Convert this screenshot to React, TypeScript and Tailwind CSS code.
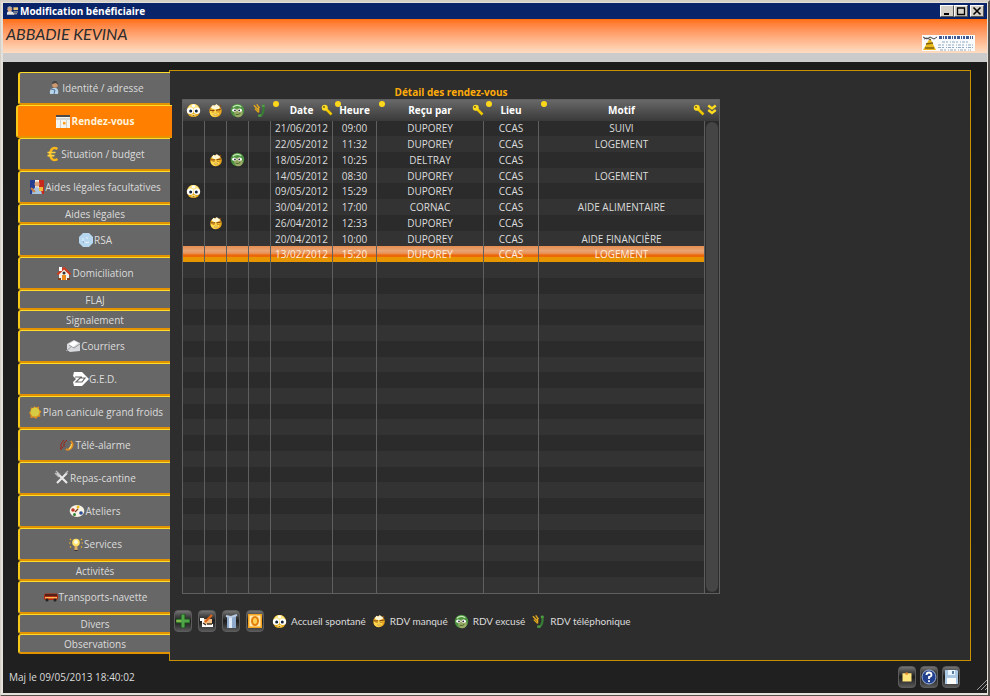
import React from "react";

type IconProps = { className?: string };

const Svg = ({ className = "size-4", children }: { className?: string; children: React.ReactNode }) => (
  <svg viewBox="0 0 16 16" className={`shrink-0 ${className}`} aria-hidden="true">
    {children}
  </svg>
);

const WideEyes = ({ className }: IconProps) => (
  <Svg className={className}>
    <circle cx="8" cy="8" r="7" fill="#e3aa1c" />
    <path d="M2 6Q3 1 8 1t6 5L8 8z" fill="#ffe680" />
    <ellipse cx="4.400" cy="8.200" rx="3.500" ry="3.400" fill="#fff" />
    <ellipse cx="11.600" cy="8.200" rx="3.500" ry="3.400" fill="#fff" />
    <circle cx="5" cy="8.600" r="1.600" fill="#14233c" />
    <circle cx="11" cy="8.600" r="1.600" fill="#14233c" />
    <circle cx="8" cy="3" r="1.800" fill="#fff" />
    <path d="M6 13h4" stroke="#fff0a0" strokeWidth="2" />
    <path d="M7 13.500h2" stroke="#7a4b00" />
  </Svg>
);

const Grumpy = ({ className }: IconProps) => (
  <Svg className={className}>
    <circle cx="8" cy="8.600" r="6.600" fill="#e9a51c" />
    <circle cx="7" cy="10" r="5" fill="#ffd84c" />
    <path d="M3 5l2-3 2 1 2-2 2 2 2 0-1 3-5 1z" fill="#fff8d8" />
    <path d="M12 3.500l2-1M2 7.800h5M8.500 7.800l5-1" stroke="#8a4a08" strokeWidth="1.300" fill="none" />
    <path d="M4 9.500h2.500M9 9.500h3" stroke="#b8741a" />
    <ellipse cx="8" cy="12.500" rx="1.800" ry="1" fill="#fff0b0" stroke="#b87410" strokeWidth=".6" />
  </Svg>
);

const GreenFace = ({ className }: IconProps) => (
  <Svg className={className}>
    <circle cx="8" cy="8" r="7.200" fill="#4c9441" />
    <circle cx="9" cy="10.500" r="4.600" fill="#9aaa66" />
    <path d="M3 4.500q4-3.500 9-.5" stroke="#c5e8b0" strokeWidth="1.300" fill="none" />
    <ellipse cx="4.600" cy="7.600" rx="2.300" ry="1.700" fill="#fff" />
    <ellipse cx="10.400" cy="7.600" rx="2.300" ry="1.700" fill="#fff" />
    <circle cx="5.300" cy="7.800" r=".9" fill="#112" />
    <circle cx="9.800" cy="7.800" r=".9" fill="#112" />
    <path d="M6 12q3 1 5-1" stroke="#3f6428" fill="none" />
  </Svg>
);

const GreenPhone = ({ className }: IconProps) => (
  <Svg className={className}>
    <path d="M11.500 2q1.500 3 .5 7-1 4-4 5" stroke="#377d35" strokeWidth="2.400" fill="none" />
    <path d="M10.500 3h3M6.500 13.500h3.500" stroke="#4f9c45" strokeWidth="2.400" />
    <path d="M2 2.500l5 5M5 1.500l3 4M3 6l4 4M7 5v5" stroke="#e3a81c" strokeWidth="1.500" />
  </Svg>
);

const KeyIcon = () => (
  <Svg className="size-3">
    <path d="M7 7l7 7" stroke="#f0c800" strokeWidth="3.400" />
    <circle cx="5" cy="5" r="4" fill="#ffdc20" />
    <circle cx="4" cy="4" r="1.200" fill="#6b5a10" />
  </Svg>
);

const Chevrons = () => (
  <Svg className="size-3">
    <path d="M3 2l5 4 5-4M3 8l5 4 5-4" stroke="#ffdc20" strokeWidth="3.200" fill="none" />
  </Svg>
);

const icons = {
  person: (
    <Svg>
      <path d="M4 14q-1-5 3-6h3q3 1 2 6z" fill="#b7d3ea" />
      <circle cx="9" cy="5" r="2.800" fill="#d09a70" />
      <path d="M6 4q0-3 3-3t3 4l-2-2z" fill="#444" />
      <path d="M5 9l4 1-1 4" stroke="#4d7098" fill="none" />
    </Svg>
  ),
  calendar: (
    <Svg>
      <rect x="0" y="2" width="14" height="13" fill="#f4f4ee" />
      <path d="M0 3h14" stroke="#4a4a4a" strokeWidth="2" />
      <path d="M0 6h14" stroke="#bbb" />
      <path d="M4.500 7v8M10.500 7v8" stroke="#d4d0c4" />
      <rect x="7" y="9" width="2.500" height="2.500" fill="#ff9a1a" />
    </Svg>
  ),
  euro: (
    <Svg>
      <path d="M12.500 3q-6-3.500-7.500 5 1.500 8.500 7.500 5" stroke="#f8b61a" strokeWidth="2.600" fill="none" />
      <path d="M2.500 6.500h8M2.500 9.700h7" stroke="#ffd23c" strokeWidth="1.700" />
    </Svg>
  ),
  flag: (
    <Svg>
      <path d="M1 1h5v14H1z" fill="#243c92" />
      <path d="M6 1h5v14H6z" fill="#eee" />
      <path d="M10 1h5v14h-5z" fill="#c72a1c" />
      <circle cx="8" cy="5" r="2.500" fill="#dda47c" />
      <path d="M3 15q0-6 5-7 4 1 5 7z" fill="#a9c4df" />
      <path d="M10 8h4v4h-4z" fill="#f5b83a" />
      <path d="M2 9l4 4" stroke="#d08040" strokeWidth="2" />
    </Svg>
  ),
  rsa: (
    <Svg>
      <path d="M5 1h6l4 4v6l-4 4H5l-4-4V5z" fill="#b7d7ee" />
      <path d="M5 6v3q3 3 6 1M8 6h2" stroke="#e8f6ff" fill="none" />
      <path d="M5 9l1 2" stroke="#7ca0bd" />
    </Svg>
  ),
  house: (
    <Svg>
      <path d="M3 8l5-5 5 5v7H3z" fill="#f5f0e8" />
      <path d="M1.500 9.500L8 3l6.500 6.500" stroke="#cc3a20" strokeWidth="2.200" fill="none" />
      <path d="M3 2h3v4H3z" fill="#fff" />
      <path d="M6 10h4v5H6z" fill="#ee8a1c" />
      <circle cx="8" cy="8" r="1.500" fill="#333" />
      <path d="M2 14h3M11 14h3" stroke="#7c4020" strokeWidth="2" />
    </Svg>
  ),
  mail: (
    <Svg>
      <path d="M2 6l7-4 6 3v8l-10 1-3-2z" fill="#d7d9dc" />
      <path d="M4 7l5 3 6-4" stroke="#999" fill="none" />
      <path d="M4 6l5-3 4 2-5 4z" fill="#fff" />
      <path d="M1 13l5-4" stroke="#a2a7ac" />
    </Svg>
  ),
  ged: (
    <Svg>
      <path d="M1 1h8l7 7-7 7H1l-1-4 3-3-3-3z" fill="#fff" />
      <path d="M3 11h6l3-4H7zM2 6h7" stroke="#666" strokeWidth="1.200" fill="none" />
    </Svg>
  ),
  sun: (
    <Svg>
      <path d="M7 2l2 1.500 3-1v3l2.500 2-1.500 2 .5 3-3 .5-1.500 2-2-1.500-3.500.5V11L2 9l2-2.500-.5-3 3 .5z" fill="#dd8d22" />
      <circle cx="8" cy="8" r="4.500" fill="#d6cb42" />
    </Svg>
  ),
  alarm: (
    <Svg>
      <path d="M2 12V7l3-4M5 10V6l3-3M1 13l3-3" stroke="#9c2418" strokeWidth="1" fill="none" />
      <path d="M12 4q3 4 0 7-3 3-5 1" stroke="#e18b22" strokeWidth="2" fill="none" />
      <path d="M12.500 7q0 3-2.500 5" stroke="#ffdc5c" strokeWidth="1.200" fill="none" />
    </Svg>
  ),
  cutlery: (
    <Svg>
      <path d="M3 3l10 10M13 3L3 13" stroke="#e8e8e8" strokeWidth="2.200" />
      <path d="M2 1l4 4M1 3l4 4M11 4l3-3" stroke="#bcbcbc" strokeWidth="1.400" />
    </Svg>
  ),
  palette: (
    <Svg>
      <ellipse cx="8" cy="8" rx="7.300" ry="6" fill="#f8f4e6" />
      <circle cx="4" cy="7" r="1.800" fill="#c43424" />
      <circle cx="9" cy="4" r="1.500" fill="#eebc20" />
      <circle cx="5.500" cy="11.500" r="1.500" fill="#30813a" />
      <circle cx="12" cy="10" r="1.800" fill="#2c4b9a" />
      <path d="M6 9l3-3" stroke="#7f3c20" strokeWidth="1.300" />
    </Svg>
  ),
  bulb: (
    <Svg>
      <circle cx="8" cy="6.500" r="3.800" fill="#ffe268" />
      <circle cx="8" cy="6" r="2" fill="#fffbe0" />
      <path d="M6.500 10h3v4h-3z" fill="#dcb060" />
      <path d="M2 3l1 1M1 7h1.500M2 11.500l1-1M14 3l-1 1M15 7h-1.500M14 11.500l-1-1" stroke="#efaf22" strokeWidth="1.200" />
      <path d="M6.500 14.500h3" stroke="#333" />
    </Svg>
  ),
  bus: (
    <Svg>
      <rect x="1" y="4.500" width="14" height="6.500" rx="2" fill="#b1260f" />
      <path d="M2 6h12" stroke="#45201a" strokeWidth="1.700" />
      <path d="M2 8.700h12" stroke="#ffc25a" strokeWidth="1.300" />
      <circle cx="4" cy="11" r="1.500" fill="#222" />
      <circle cx="12" cy="11" r="1.500" fill="#222" />
    </Svg>
  ),
};

type Tab = { label: string; icon?: keyof typeof icons; active?: boolean };

const tabs: Tab[] = [
  { label: "Identité / adresse", icon: "person" },
  { label: "Rendez-vous", icon: "calendar", active: true },
  { label: "Situation / budget", icon: "euro" },
  { label: "Aides légales facultatives", icon: "flag" },
  { label: "Aides légales" },
  { label: "RSA", icon: "rsa" },
  { label: "Domiciliation", icon: "house" },
  { label: "FLAJ" },
  { label: "Signalement" },
  { label: "Courriers", icon: "mail" },
  { label: "G.E.D.", icon: "ged" },
  { label: "Plan canicule grand froids", icon: "sun" },
  { label: "Télé-alarme", icon: "alarm" },
  { label: "Repas-cantine", icon: "cutlery" },
  { label: "Ateliers", icon: "palette" },
  { label: "Services", icon: "bulb" },
  { label: "Activités" },
  { label: "Transports-navette", icon: "bus" },
  { label: "Divers" },
  { label: "Observations" },
];

type Row = { date: string; time: string; by: string; reason?: string; walkIn?: boolean; missed?: boolean; excused?: boolean };

const rows: Row[] = [
  { date: "21/06/2012", time: "09:00", by: "DUPOREY", reason: "SUIVI" },
  { date: "22/05/2012", time: "11:32", by: "DUPOREY", reason: "LOGEMENT" },
  { date: "18/05/2012", time: "10:25", by: "DELTRAY", missed: true, excused: true },
  { date: "14/05/2012", time: "08:30", by: "DUPOREY", reason: "LOGEMENT" },
  { date: "09/05/2012", time: "15:29", by: "DUPOREY", walkIn: true },
  { date: "30/04/2012", time: "17:00", by: "CORNAC", reason: "AIDE ALIMENTAIRE" },
  { date: "26/04/2012", time: "12:33", by: "DUPOREY", missed: true },
  { date: "20/04/2012", time: "10:00", by: "DUPOREY", reason: "AIDE FINANCIÈRE" },
  { date: "13/02/2012", time: "15:20", by: "DUPOREY", reason: "LOGEMENT" },
];
const ROW_COUNT = 30;
const SELECTED = 8;

const WinButton = ({ label, children }: { label: string; children: React.ReactNode }) => (
  <button
    aria-label={label}
    className="flex h-3 w-[14px] items-center justify-center border border-t-white border-r-[#555] border-b-[#555] border-l-white bg-[#d4d0c8]"
  >
    <svg viewBox="0 0 10 10" className="size-[10px]" fill="none" stroke="#000" aria-hidden="true">
      {children}
    </svg>
  </button>
);

const ToolButton = ({ label, children }: { label: string; children: React.ReactNode }) => (
  <button
    aria-label={label}
    className="flex h-[22px] w-[18px] items-center justify-center rounded-[4px] border border-[#5c5c5c] bg-linear-to-b from-[#747474] via-[#1c1c1c] to-[#585858]"
  >
    {children}
  </button>
);

const HeadCell = ({ label, search = false }: { label: string; search?: boolean }) => (
  <th scope="col" className="relative p-0 font-bold">
    <span className="absolute top-px left-[2px] size-[6px] rounded-full bg-[#ffd81c]" />
    {label}
    {search && (
      <span className="absolute top-1 right-0">
        <KeyIcon />
      </span>
    )}
  </th>
);

const Cell = ({ children }: { children?: React.ReactNode }) => (
  <td className="border-l border-[#5f5f5f] p-0">
    <div className="flex h-[15px] items-center justify-center">{children}</div>
  </td>
);

const Legend = ({ icon, children }: { icon: React.ReactNode; children: React.ReactNode }) => (
  <li className="flex items-center gap-1">
    {icon}
    {children}
  </li>
);

export default function App() {
  return (
    <div className="flex min-h-screen flex-col border-t-2 border-r-2 border-b-2 border-l border-t-[#d4d0c8] border-r-[#55524e] border-b-[#55524e] border-l-[#d4d0c8] bg-[#1f1f1f] font-['Open_Sans','Noto_Sans',sans-serif] text-[10px] leading-3 text-[#dcdcdc]">
      <div className="flex grow flex-col border-t border-r border-b-2 border-l-2 border-[#e4e1db]">
        <div className="flex h-4 items-center justify-between bg-[#0a246a] px-[3px]">
          <div className="flex items-center gap-px font-bold text-white">
            <svg viewBox="0 0 14 12" className="h-3 w-[13px]" aria-hidden="true">
              <path d="M1 9q0-3 3-3 4 0 5 4H1z" fill="#e4e4e4" />
              <circle cx="4" cy="4" r="2.500" fill="#d8a07c" />
              <path d="M1 3q3-4 6 0z" fill="#aaa" />
              <path d="M8 2h5v3H8z" fill="#e8c67a" />
              <path d="M8 7h5M8 9h4" stroke="#d7cdb8" />
            </svg>
            Modification bénéficiaire
          </div>
          <div className="flex">
            <WinButton label="Réduire">
              <path d="M2 8h5" strokeWidth="2" />
            </WinButton>
            <WinButton label="Agrandir">
              <path d="M1.500 2h7v6.500h-7zM1 2h8" strokeWidth="1.300" />
            </WinButton>
            <span className="w-[2px]" />
            <WinButton label="Fermer">
              <path d="M1.500 1.500l7 7M8.500 1.500l-7 7" strokeWidth="1.600" />
            </WinButton>
          </div>
        </div>

        <header className="flex h-[34px] items-end justify-between bg-linear-to-b from-[#ff6f05] to-[#ffdcc2] pr-3 pl-[3px]">
          <h1 className="self-start pt-[3px] font-['Lato','Open_Sans',sans-serif] text-[16px] leading-6 text-[#2c2c2c] italic">ABBADIE KEVINA</h1>
          <svg viewBox="0 0 53 16" className="mb-[2px] h-4 w-[53px]" role="img" aria-label="Logo">
            <rect width="53" height="16" fill="#f8fafc" />
            <path d="M8 3l6 12H1z" fill="#ecb91c" />
            <path d="M4 9l7-1M3 13h9" stroke="#7c6412" strokeWidth="1.500" />
            <path d="M1 2l4 2 3-2 4 2 3-2M2 4l3-1 4 2" stroke="#46464a" fill="none" />
            <path d="M17 2.500h34" stroke="#405a94" strokeWidth="3" strokeDasharray="3 1 1 1 2 1" />
            <path d="M20 7h26M16 10h35M16 12.500h35M18 15h31" stroke="#90a9c0" strokeDasharray="3 1 2 2 1 1" />
          </svg>
        </header>
        <div className="h-[9px] bg-[#cbcbcb]" />

        <main className="flex grow items-start bg-linear-to-b from-[#1b1b1b] to-[#202020] pt-2 pr-4 pl-[15px]">
          <nav className="relative z-10 -mr-px flex w-[152px] shrink-0 flex-col pt-[2px]" aria-label="Rubriques">
            {tabs.map((t) => (
              <button
                key={t.label}
                className={`flex items-center justify-center rounded-l-[3px] border-t border-b-2 border-l-2 border-t-[#ffdc28] border-b-[#e39300] border-l-[#f7ca18] ${
                  t.icon ? "h-[33px]" : "h-5"
                } ${t.active ? "relative -mr-[2px] -ml-[2px] bg-[#ff8000] font-bold text-[#fff3dc]" : "bg-[#676767]"}`}
              >
                {t.icon && icons[t.icon]}
                {t.label}
              </button>
            ))}
          </nav>

          <section className="min-w-0 grow border border-[#c99100] bg-[#2d2d2d] pb-7 pl-1">
            <div className="ml-[8px] w-[538px] pt-[15px]">
              <h2 className="pb-px text-center font-bold text-[#ffab0a]">Détail des rendez-vous</h2>
              <table className="h-[495px] w-full table-fixed border-collapse border border-[#5f5f5f] text-center">
                <colgroup>
                  <col className="w-[22px]" />
                  <col className="w-[22px]" />
                  <col className="w-[22px]" />
                  <col className="w-[22px]" />
                  <col className="w-[62px]" />
                  <col className="w-[44px]" />
                  <col className="w-[107px]" />
                  <col className="w-[55px]" />
                  <col />
                  <col className="w-[15px]" />
                </colgroup>
                <thead>
                  <tr className="h-[21px] bg-linear-to-b from-[#686868] to-[#3a3a3a] text-white">
                    {[
                      { n: "Accueil spontané", I: WideEyes },
                      { n: "RDV manqué", I: Grumpy },
                      { n: "RDV excusé", I: GreenFace },
                      { n: "RDV téléphonique", I: GreenPhone },
                    ].map(({ n, I }) => (
                      <th key={n} scope="col" aria-label={n} className="p-0">
                        <div className="flex justify-center">
                          <I className="size-[15px]" />
                        </div>
                      </th>
                    ))}
                    <HeadCell label="Date" search />
                    <HeadCell label="Heure" />
                    <HeadCell label="Reçu par" search />
                    <HeadCell label="Lieu" />
                    <HeadCell label="Motif" search />
                    <th scope="col" aria-label="Options" className="p-0">
                      <div className="flex justify-center">
                        <Chevrons />
                      </div>
                    </th>
                  </tr>
                </thead>
                <tbody>
                  {Array.from({ length: ROW_COUNT }, (_, i) => {
                    const r = rows[i];
                    const bg =
                      i === SELECTED
                        ? "bg-[linear-gradient(to_bottom,#e58d50_0%,#e9a474_30%,#e88b4c_50%,#ee6508_55%,#ea6a08_68%,#e89600_72%,#e89600_100%)] text-[#ffeedd]"
                        : i % 2
                          ? "bg-[#333333]"
                          : "bg-[#2b2b2b]";
                    return (
                      <tr key={i} className={bg}>
                        <Cell>{r?.walkIn && <WideEyes className="size-[15px]" />}</Cell>
                        <Cell>{r?.missed && <Grumpy className="size-[14px]" />}</Cell>
                        <Cell>{r?.excused && <GreenFace className="size-[15px]" />}</Cell>
                        <Cell />
                        <Cell>{r?.date}</Cell>
                        <Cell>{r?.time}</Cell>
                        <Cell>{r?.by}</Cell>
                        <Cell>{r && "CCAS"}</Cell>
                        <Cell>{r?.reason}</Cell>
                        {i === 0 && (
                          <td rowSpan={ROW_COUNT} className="h-px border-l border-[#5f5f5f] bg-[#2b2b2b] p-px">
                            <div className="h-full rounded-full bg-[#454545]" />
                          </td>
                        )}
                      </tr>
                    );
                  })}
                </tbody>
              </table>
            </div>

            <div className="flex items-center gap-2 pt-4">
              <div className="flex gap-[6px]">
                <ToolButton label="Ajouter">
                  <Svg>
                    <path d="M8 1v14M1 8h14" stroke="#1d4d1d" strokeWidth="5" />
                    <path d="M8 1.500v13M1.500 8h13" stroke="#4fa548" strokeWidth="3" />
                    <path d="M1 8h5" stroke="#b8c850" />
                  </Svg>
                </ToolButton>
                <ToolButton label="Modifier">
                  <Svg>
                    <path d="M1 5h4v6h9v3H3V8H1z" fill="#fff" />
                    <path d="M5 6h8v5H5z" fill="#f2c088" />
                    <path d="M6 9l7-7" stroke="#d8651c" strokeWidth="2.400" />
                    <path d="M4 10l3 2M8 11h5" stroke="#432" strokeWidth="1.500" />
                  </Svg>
                </ToolButton>
                <ToolButton label="Supprimer">
                  <Svg>
                    <path d="M4 3h9v12H4z" fill="#8fa9cc" />
                    <path d="M6 4h3v11H6z" fill="#dce8f6" />
                    <path d="M3 3l5 1 6-2" stroke="#b9cbe2" strokeWidth="2" fill="none" />
                  </Svg>
                </ToolButton>
                <ToolButton label="Outlook">
                  <Svg>
                    <rect x="1" y="1" width="14" height="14" fill="#f5a31c" />
                    <rect x="2.500" y="2.500" width="11" height="11" fill="#ffe9b0" />
                    <ellipse cx="8" cy="8" rx="3" ry="4" fill="#ffd257" stroke="#e57f0c" strokeWidth="2" />
                  </Svg>
                </ToolButton>
              </div>
              <ul className="flex gap-[6px] font-['Lato','Open_Sans',sans-serif]">
                <Legend icon={<WideEyes className="size-[15px]" />}>Accueil spontané</Legend>
                <Legend icon={<Grumpy className="size-[14px]" />}>RDV manqué</Legend>
                <Legend icon={<GreenFace className="size-[15px]" />}>RDV excusé</Legend>
                <Legend icon={<GreenPhone className="size-[15px]" />}>RDV téléphonique</Legend>
              </ul>
            </div>
          </section>
        </main>

        <footer className="flex h-8 items-center justify-between bg-[#202020] pl-[6px]">
          <span>Maj le 09/05/2013 18:40:02</span>
          <div className="flex items-center gap-1">
            <ToolButton label="Note">
              <Svg className="size-3">
                <path d="M2 3h12v11H2z" fill="#ffe57c" />
                <path d="M6 2h3v3H6z" fill="#e88522" />
              </Svg>
            </ToolButton>
            <ToolButton label="Aide">
              <Svg>
                <circle cx="8" cy="8" r="7" fill="#203f8c" stroke="#9db0d8" />
                <path d="M5.500 6q0-2.500 2.500-2.500T10.500 6Q10.500 7.500 8 8v2M8 11.300v1.700" stroke="#fff" strokeWidth="1.800" fill="none" />
              </Svg>
            </ToolButton>
            <ToolButton label="Enregistrer">
              <Svg>
                <path d="M2 1h12l1 1v13H2z" fill="#a9c7e2" />
                <path d="M5 1h7v5H5z" fill="#e8f4ff" />
                <path d="M4 9h9v6H4z" fill="#fff" />
                <path d="M9 2h2v3H9z" fill="#5a7ea2" />
              </Svg>
            </ToolButton>
            <svg viewBox="0 0 10 10" className="mt-4 ml-[13px] size-[10px]" stroke="#9a9a9a" aria-hidden="true">
              <path d="M0 10L10 0M4 10l6-6M8 10l2-2" />
            </svg>
          </div>
        </footer>
      </div>
    </div>
  );
}
